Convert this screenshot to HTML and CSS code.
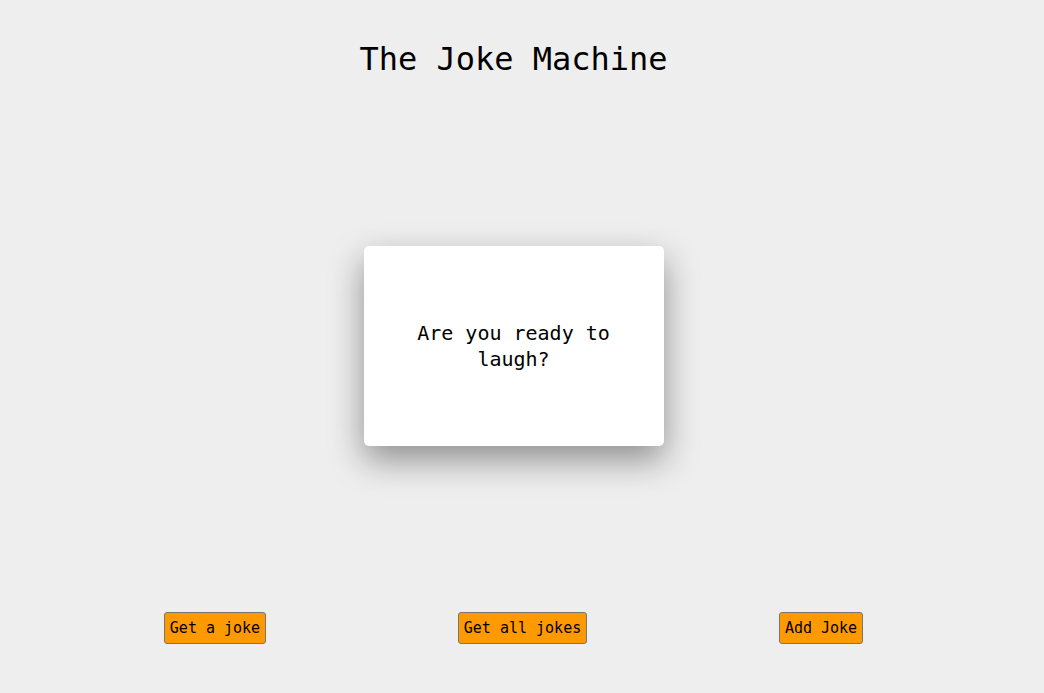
FILE: index.html
```html
<!DOCTYPE html>
<html>
<head>
<meta charset="utf-8">
<link rel="stylesheet" href="styles.css">
</head>
<body>
<div class="app">
  <h1 class="title">The Joke Machine</h1>
  <div class="stage">
    <div class="card">
      <p class="card-text">Are you ready to laugh?</p>
    </div>
  </div>
  <div class="actions">
    <button class="btn">Get a joke</button>
    <button class="btn">Get all jokes</button>
    <button class="btn">Add Joke</button>
  </div>
</div>
</body>
</html>
```

FILE: styles.css
```css
html, body {
  margin: 0;
  padding: 0;
  background: #eeeeee;
}
body {
  font-family: "DejaVu Sans Mono", "Liberation Mono", monospace;
  color: #000;
}
.app {
  width: 1027px;
  display: flex;
  flex-direction: column;
  align-items: center;
}
.title {
  margin: 41px 0 0;
  font-size: 32px;
  font-weight: normal;
  line-height: 37px;
}
.stage {
  margin-top: 168px;
  display: flex;
  justify-content: center;
}
.card {
  width: 300px;
  height: 200px;
  box-sizing: border-box;
  padding: 0 24px;
  background: #fff;
  border-radius: 5px;
  box-shadow: 0 14px 34px rgba(0, 0, 0, 0.4);
  display: flex;
  align-items: center;
  justify-content: center;
}
.card-text {
  margin: 0;
  font-size: 20px;
  line-height: 26px;
  text-align: center;
}
.actions {
  margin-top: 166px;
  width: 891px;
  display: flex;
  justify-content: space-around;
}
.btn {
  font-family: "DejaVu Sans Mono", "Liberation Mono", monospace;
  font-size: 15px;
  line-height: 18px;
  height: 32px;
  padding: 6px 5px;
  border: 1px solid #767676;
  border-radius: 3px;
  background: #ff9900;
  color: #000;
}
```
